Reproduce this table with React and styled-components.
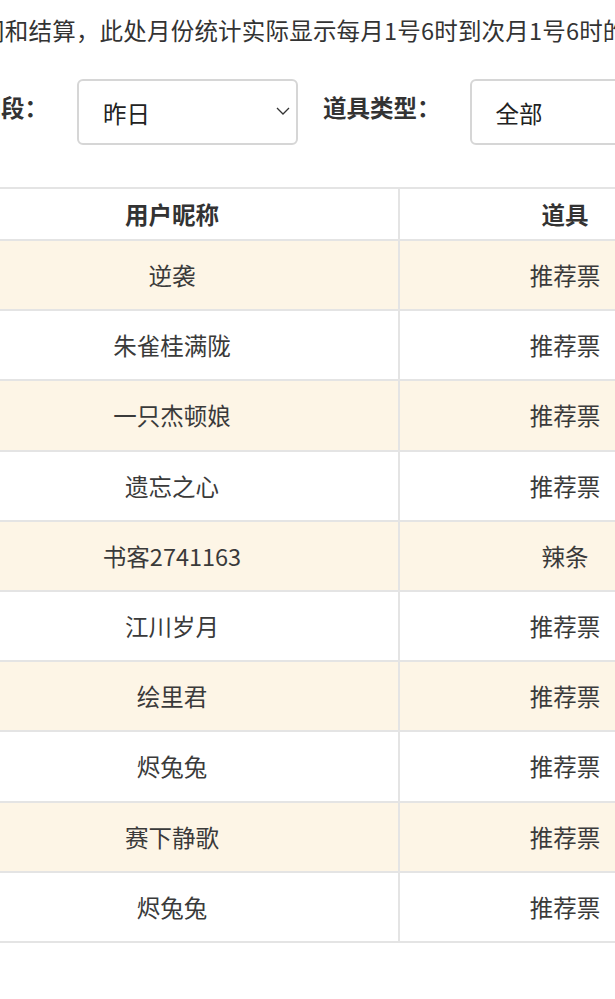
import React from "react";
import styled, { createGlobalStyle } from "styled-components";

const Global = createGlobalStyle`
  html, body { margin: 0; padding: 0; background: #ffffff; }
  body { font-family: "Noto Sans CJK SC", "Noto Sans", sans-serif; color: #333333; }
`;

const Viewport = styled.div`
  width: 615px;
  height: 999px;
  overflow: hidden;
  background: #ffffff;
`;

const Canvas = styled.div`
  width: 1000px;
  margin-left: -100px;
  display: flex;
  flex-direction: column;
  align-items: flex-start;
`;

const Notice = styled.p`
  margin: 13px 0 0 ${(p) => p.$offset}px;
  font-size: 23.5px;
  letter-spacing: 0.2px;
  line-height: 34px;
  color: #333333;
  white-space: nowrap;
`;

const FilterBar = styled.div`
  display: flex;
  align-items: center;
  gap: 25px;
  margin: 32px 0 0 ${(p) => p.$offset}px;
`;

const FilterItem = styled.div`
  display: flex;
  align-items: center;
  gap: 29px;
`;

const Label = styled.span`
  font-size: 23.5px;
  font-weight: 700;
  line-height: 30px;
  color: #333333;
  white-space: nowrap;
  margin-bottom: 10px;
`;

const SelectBox = styled.div`
  box-sizing: border-box;
  width: 221px;
  height: 66px;
  border: 2px solid #d6d6d6;
  border-radius: 6px;
  background: #ffffff;
  display: flex;
  align-items: center;
  justify-content: space-between;
  padding: 0 6px 0 24px;
`;

const SelectText = styled.span`
  font-size: 23.5px;
  color: #222222;
  line-height: 30px;
  padding-top: 2px;
`;

const Chevron = styled.svg`
  width: 14px;
  height: 8px;
  margin-bottom: 2px;
`;

const Table = styled.table`
  margin: 42px 0 0 ${(p) => p.$offset}px;
  border-collapse: collapse;
  table-layout: fixed;
  font-size: 23.5px;
`;

const HeadCell = styled.th`
  width: ${(p) => p.$w}px;
  height: 50px;
  border: 2px solid #e4e4e4;
  font-weight: 700;
  color: #333333;
  text-align: center;
  padding: 0;
  line-height: 30px;
`;

const Row = styled.tr`
  background: ${(p) => (p.$alt ? "#fdf5e6" : "#ffffff")};
`;

const Cell = styled.td`
  height: 68.2px;
  border: 2px solid #e4e4e4;
  text-align: center;
  padding: 0;
  color: #3a3a3a;
  line-height: 30px;
`;

const rows = [
  ["逆袭", "推荐票"],
  ["朱雀桂满陇", "推荐票"],
  ["一只杰顿娘", "推荐票"],
  ["遗忘之心", "推荐票"],
  ["书客2741163", "辣条"],
  ["江川岁月", "推荐票"],
  ["绘里君", "推荐票"],
  ["烬兔兔", "推荐票"],
  ["赛下静歌", "推荐票"],
  ["烬兔兔", "推荐票"],
];

function Select({ value, arrow }) {
  return (
    <SelectBox>
      <SelectText>{value}</SelectText>
      {arrow && (
        <Chevron viewBox="0 0 14 8">
          <polyline points="1,1 7,7 13,1" fill="none" stroke="#333" strokeWidth="1.3" />
        </Chevron>
      )}
    </SelectBox>
  );
}

export default function App() {
  return (
    <>
      <Global />
      <Viewport>
        <Canvas>
          <Notice $offset={10}>
            统计时间和结算，此处月份统计实际显示每月1号6时到次月1号6时的数据。
          </Notice>
          <FilterBar $offset={54}>
            <FilterItem>
              <Label>时间段：</Label>
              <Select value="昨日" arrow />
            </FilterItem>
            <FilterItem>
              <Label>道具类型：</Label>
              <Select value="全部" arrow />
            </FilterItem>
          </FilterBar>
          <Table $offset={44}>
            <thead>
              <tr>
                <HeadCell $w={452}>用户昵称</HeadCell>
                <HeadCell $w={330}>道具</HeadCell>
              </tr>
            </thead>
            <tbody>
              {rows.map(([name, item], i) => (
                <Row key={i} $alt={i % 2 === 0}>
                  <Cell>{name}</Cell>
                  <Cell>{item}</Cell>
                </Row>
              ))}
            </tbody>
          </Table>
        </Canvas>
      </Viewport>
    </>
  );
}
